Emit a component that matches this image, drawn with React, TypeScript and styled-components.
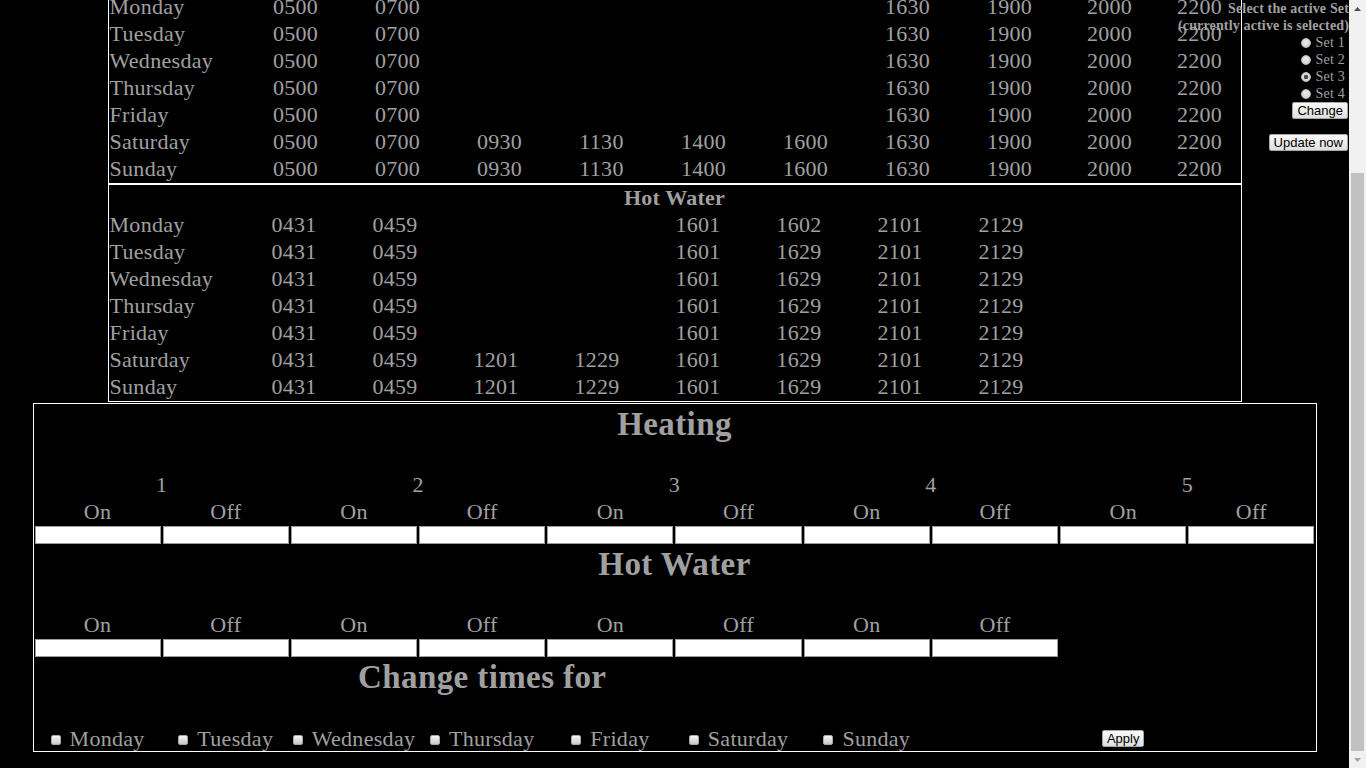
import React from "react";
import styled, { createGlobalStyle } from "styled-components";

const GlobalStyle = createGlobalStyle`
  html, body {
    margin: 0;
    padding: 0;
    background: #000;
    overflow: hidden;
  }
  body {
    font-family: "Liberation Serif", "Times New Roman", serif;
    color: #a0a0a0;
  }
`;

const TEXT = "#a0a0a0";

const Frame = styled.div`
  position: relative;
  display: flex;
  width: 100vw;
  height: 100vh;
  overflow: hidden;
  background: #000;
`;

const Viewport = styled.div`
  flex: 1;
  min-width: 0;
  display: flex;
  flex-direction: column;
  justify-content: flex-end;
  overflow: hidden;
`;

const Page = styled.main`
  flex: none;
  display: flex;
  flex-direction: column;
  align-items: center;
  padding: 8px 8px 16px;
`;

/* ---------- schedule tables ---------- */

const ScheduleTable = styled.section`
  box-sizing: border-box;
  width: 1134px;
  border: 1px solid #fff;
`;

const TableTitle = styled.h3`
  margin: 0;
  height: 27px;
  line-height: 26px;
  text-align: center;
  font-size: 22px;
  font-weight: bold;
  letter-spacing: 0.2px;
  color: ${TEXT};
`;

const DayRow = styled.div<{ $cols: string }>`
  display: grid;
  grid-template-columns: ${(p) => p.$cols};
  height: 27px;
  line-height: 26px;
  font-size: 22px;
  letter-spacing: 0.3px;
  color: ${TEXT};
`;

const DayName = styled.span`
  padding-left: 1px;
  white-space: nowrap;
`;

const TimeCell = styled.span`
  text-align: center;
`;

/* ---------- editor box ---------- */

const Editor = styled.form`
  box-sizing: border-box;
  width: 1284px;
  margin-top: 1px;
  border: 1px solid #fff;
  padding: 0 1px;
  display: flex;
  flex-direction: column;
`;

const EditorRow = styled.div<{ $h: number }>`
  display: grid;
  grid-template-columns: repeat(10, 1fr);
  column-gap: 2px;
  align-items: center;
  height: ${(p) => p.$h}px;
`;

const SectionHeading = styled.h2<{ $span: number }>`
  grid-column: 1 / span ${(p) => p.$span};
  margin: 0;
  text-align: center;
  font-size: 33px;
  font-weight: bold;
  letter-spacing: 0.4px;
  color: ${TEXT};
  line-height: 37px;
`;

const ColLabel = styled.div<{ $span?: number }>`
  grid-column: span ${(p) => p.$span ?? 1};
  text-align: center;
  font-size: 22px;
  letter-spacing: 0.3px;
  line-height: 25px;
  color: ${TEXT};
`;

const TimeInput = styled.input`
  box-sizing: border-box;
  width: 100%;
  height: 18px;
  margin: 0;
  padding: 0 2px;
  border: 1px solid #9b9b9b;
  background: #fff;
  font-size: 13px;
`;

const DayOption = styled.label`
  display: flex;
  align-items: center;
  justify-content: center;
  gap: 9px;
  font-size: 22px;
  letter-spacing: 0.3px;
  line-height: 25px;
  color: ${TEXT};
  white-space: nowrap;
`;

const Check = styled.input.attrs({ type: "checkbox" })`
  appearance: none;
  -webkit-appearance: none;
  box-sizing: border-box;
  width: 10px;
  height: 10px;
  margin: 3px 0 0;
  border: 1px solid #a8a8a8;
  border-radius: 2px;
  background: linear-gradient(#f6f6f6, #c8c8c8);
`;

const ApplyCell = styled.div`
  grid-column: span 3;
  display: flex;
  justify-content: center;
  align-items: center;
`;

const PlainButton = styled.button`
  box-sizing: border-box;
  height: 17px;
  margin: 0;
  padding: 0 4px;
  font-family: "Liberation Sans", Arial, sans-serif;
  font-size: 13px;
  line-height: 15px;
  color: #000;
  background: linear-gradient(#fbfbfb, #dedede);
  border: 1px solid #a6a6a6;
  border-radius: 2px;
  white-space: nowrap;
`;

/* ---------- set panel (fixed, top right) ---------- */

const SetPanel = styled.form`
  position: absolute;
  top: 0;
  right: 17px;
  display: flex;
  flex-direction: column;
  align-items: flex-end;
  font-size: 14px;
  line-height: 17px;
  color: ${TEXT};
`;

const PanelTitle = styled.div`
  font-weight: bold;
  letter-spacing: 0.15px;
  white-space: nowrap;
`;

const SetOption = styled.label`
  display: flex;
  align-items: center;
  gap: 5px;
  height: 17px;
  padding-right: 4px;
  letter-spacing: 0.2px;
  white-space: nowrap;
`;

const Radio = styled.input.attrs({ type: "radio" })`
  appearance: none;
  -webkit-appearance: none;
  box-sizing: border-box;
  width: 10px;
  height: 10px;
  margin: 1px 0 0;
  border-radius: 50%;
  border: 1px solid #bdbdbd;
  background: radial-gradient(circle at 50% 40%, #ececec, #cbcbcb);
  &:checked {
    background: radial-gradient(circle, #4d4d4d 0 2px, #e2e2e2 2.6px, #cbcbcb);
  }
`;

const PanelButtons = styled.div`
  display: flex;
  flex-direction: column;
  align-items: flex-end;
  gap: 15px;
  padding-right: 1px;
`;

/* ---------- scrollbar drawing ---------- */

const ScrollTrack = styled.div`
  flex: none;
  width: 17px;
  height: 100%;
  background: #f1f1f1;
  display: flex;
  flex-direction: column;
`;

const ScrollArrow = styled.div`
  flex: none;
  height: 17px;
  display: flex;
  align-items: center;
  justify-content: center;
`;

const ScrollGutter = styled.div`
  flex: 1;
  display: flex;
  flex-direction: column;
  justify-content: flex-end;
  padding: 0 2px;
`;

const ScrollThumb = styled.div`
  height: 578px;
  background: #c1c1c1;
`;

/* ---------- data ---------- */

type Row = [string, string[]];

const weekday = ["0500", "0700", "", "", "", "", "1630", "1900", "2000", "2200"];
const weekend = ["0500", "0700", "0930", "1130", "1400", "1600", "1630", "1900", "2000", "2200"];

const heating: Row[] = [
  ["Monday", weekday],
  ["Tuesday", weekday],
  ["Wednesday", weekday],
  ["Thursday", weekday],
  ["Friday", weekday],
  ["Saturday", weekend],
  ["Sunday", weekend],
];

const hwWeek = ["0431", "0459", "", "", "1601", "1629", "2101", "2129"];
const hwEnd = ["0431", "0459", "1201", "1229", "1601", "1629", "2101", "2129"];

const hotWater: Row[] = [
  ["Monday", ["0431", "0459", "", "", "1601", "1602", "2101", "2129"]],
  ["Tuesday", hwWeek],
  ["Wednesday", hwWeek],
  ["Thursday", hwWeek],
  ["Friday", hwWeek],
  ["Saturday", hwEnd],
  ["Sunday", hwEnd],
];

const days = ["Monday", "Tuesday", "Wednesday", "Thursday", "Friday", "Saturday", "Sunday"];

const HEAT_COLS = "136px repeat(8, 102px) 98px 1fr";
const HW_COLS = "135px repeat(8, 101px) 1fr";

function Schedule({ title, rows, cols }: { title: string; rows: Row[]; cols: string }) {
  return (
    <ScheduleTable>
      <TableTitle>{title}</TableTitle>
      {rows.map(([day, times]) => (
        <DayRow key={day} $cols={cols}>
          <DayName>{day}</DayName>
          {times.map((t, i) => (
            <TimeCell key={i}>{t}</TimeCell>
          ))}
        </DayRow>
      ))}
    </ScheduleTable>
  );
}

function OnOffLabels({ pairs }: { pairs: number }) {
  return (
    <>
      {Array.from({ length: pairs }).flatMap((_, i) => [
        <ColLabel key={`on${i}`}>On</ColLabel>,
        <ColLabel key={`off${i}`}>Off</ColLabel>,
      ])}
    </>
  );
}

function Inputs({ count }: { count: number }) {
  return (
    <>
      {Array.from({ length: count }).map((_, i) => (
        <TimeInput key={i} type="text" />
      ))}
    </>
  );
}

export default function App() {
  return (
    <>
      <GlobalStyle />
      <Frame>
        <Viewport>
          <Page>
            <Schedule title="Heating" rows={heating} cols={HEAT_COLS} />
            <Schedule title="Hot Water" rows={hotWater} cols={HW_COLS} />
            <Editor onSubmit={(e) => e.preventDefault()}>
              <EditorRow $h={40}>
                <SectionHeading $span={10}>Heating</SectionHeading>
              </EditorRow>
              <EditorRow $h={27} />
              <EditorRow $h={27}>
                {[1, 2, 3, 4, 5].map((n) => (
                  <ColLabel key={n} $span={2}>
                    {n}
                  </ColLabel>
                ))}
              </EditorRow>
              <EditorRow $h={27}>
                <OnOffLabels pairs={5} />
              </EditorRow>
              <EditorRow $h={20}>
                <Inputs count={10} />
              </EditorRow>
              <EditorRow $h={39}>
                <SectionHeading $span={10}>Hot Water</SectionHeading>
              </EditorRow>
              <EditorRow $h={27} />
              <EditorRow $h={27}>
                <OnOffLabels pairs={4} />
              </EditorRow>
              <EditorRow $h={20}>
                <Inputs count={8} />
              </EditorRow>
              <EditorRow $h={39}>
                <SectionHeading $span={7}>Change times for</SectionHeading>
              </EditorRow>
              <EditorRow $h={28} />
              <EditorRow $h={26}>
                {days.map((d) => (
                  <DayOption key={d}>
                    <Check />
                    {d}
                  </DayOption>
                ))}
                <ApplyCell>
                  <PlainButton type="submit">Apply</PlainButton>
                </ApplyCell>
              </EditorRow>
            </Editor>
          </Page>
        </Viewport>

        <SetPanel onSubmit={(e) => e.preventDefault()}>
          <PanelTitle>Select the active Set</PanelTitle>
          <PanelTitle>(currently active is selected)</PanelTitle>
          {[1, 2, 3, 4].map((n) => (
            <SetOption key={n}>
              <Radio name="set" defaultChecked={n === 3} />
              Set {n}
            </SetOption>
          ))}
          <PanelButtons>
            <PlainButton type="submit">Change</PlainButton>
            <PlainButton type="button">Update now</PlainButton>
          </PanelButtons>
        </SetPanel>

        <ScrollTrack>
          <ScrollArrow>
            <svg width="7" height="4" viewBox="0 0 7 4">
              <path d="M0 4 L3.5 0 L7 4 Z" fill="#505050" />
            </svg>
          </ScrollArrow>
          <ScrollGutter>
            <ScrollThumb />
          </ScrollGutter>
          <ScrollArrow>
            <svg width="7" height="4" viewBox="0 0 7 4">
              <path d="M0 0 L7 0 L3.5 4 Z" fill="#a3a3a3" />
            </svg>
          </ScrollArrow>
        </ScrollTrack>
      </Frame>
    </>
  );
}
